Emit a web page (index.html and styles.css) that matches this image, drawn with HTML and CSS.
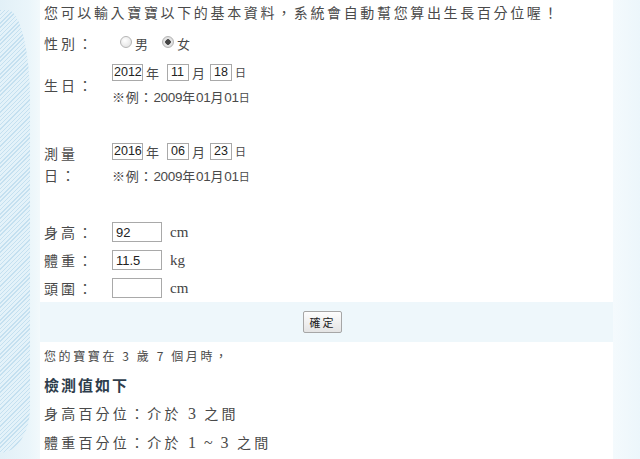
FILE: index.html
```html
<!DOCTYPE html>
<html>
<head>
<meta charset="utf-8">
<link rel="stylesheet" href="styles.css">
</head>
<body>
<div class="page">
  <div class="deco-left"><div class="stripes"></div></div>
  <div class="main">
    <div class="panel panel-form">
      <p class="intro">您可以輸入寶寶以下的基本資料，系統會自動幫您算出生長百分位喔！</p>
      <div class="row row-gender">
        <div class="label">性別：</div>
        <div class="field">
          <span class="radio"></span><span class="opt">男</span>
          <span class="radio checked"></span><span class="opt">女</span>
        </div>
      </div>
      <div class="row row-birth">
        <div class="label">生日：</div>
        <div class="field">
          <div class="date">
            <input class="num year" value="2012"><span class="u">年</span>
            <input class="num md" value="11"><span class="u">月</span>
            <input class="num md" value="18"><span class="u sm">日</span>
          </div>
          <div class="example">※例：<span class="d">2009</span>年<span class="d">01</span>月<span class="d">01</span><span class="sm">日</span></div>
        </div>
      </div>
      <div class="row row-measure">
        <div class="label">測量日：</div>
        <div class="field">
          <div class="date">
            <input class="num year" value="2016"><span class="u">年</span>
            <input class="num md" value="06"><span class="u">月</span>
            <input class="num md" value="23"><span class="u sm">日</span>
          </div>
          <div class="example">※例：<span class="d">2009</span>年<span class="d">01</span>月<span class="d">01</span><span class="sm">日</span></div>
        </div>
      </div>
      <div class="row row-metric first">
        <div class="label">身高：</div>
        <div class="field"><input class="num big" value="92"><span class="unit">cm</span></div>
      </div>
      <div class="row row-metric">
        <div class="label">體重：</div>
        <div class="field"><input class="num big" value="11.5"><span class="unit">kg</span></div>
      </div>
      <div class="row row-metric">
        <div class="label">頭圍：</div>
        <div class="field"><input class="num big" value=""><span class="unit">cm</span></div>
      </div>
    </div>
    <div class="band"><button class="btn">確定</button></div>
    <div class="panel panel-result">
      <p class="age">您的寶寶在 3 歲 7 個月時，</p>
      <p class="heading">檢測值如下</p>
      <p class="res">身高百分位：介於 <span class="n">3</span> 之間</p>
      <p class="res">體重百分位：介於 <span class="n">1 ~ 3</span> 之間</p>
    </div>
  </div>
  <div class="deco-right"></div>
</div>
</body>
</html>
```

FILE: styles.css
```css
html, body {
  margin: 0;
  padding: 0;
}
body {
  background: #eef7fb;
  font-family: "Noto Sans CJK TC", "Noto Sans", sans-serif;
  color: #4a4a4a;
}
.page {
  display: flex;
  width: 640px;
  height: 459px;
  overflow: hidden;
}
.deco-left {
  width: 40px;
  flex: none;
  background: linear-gradient(to right, #e2f0f7, #eaf5fa 70%, #f2f9fc);
  display: flex;
}
.stripes {
  width: 30px;
  margin: 10px 0 6px 0;
  border-radius: 0 30px 40px 0 / 0 120px 60px 0;
  background: repeating-linear-gradient(135deg, #c4e0f0 0 1px, #e4f2f9 1px 3px);
}
.main {
  width: 573px;
  flex: none;
  display: flex;
  flex-direction: column;
}
.deco-right {
  flex: 1;
  background: linear-gradient(to right, #f4fafd, #ecf6fb);
}
.panel {
  background: #ffffff;
  box-sizing: border-box;
}
.panel-form {
  height: 302px;
  padding: 4px 0 0 4px;
  overflow: hidden;
}
.intro {
  margin: 0;
  font-size: 14px;
  line-height: 17px;
  letter-spacing: 2.65px;
  white-space: nowrap;
}
.row {
  display: flex;
  align-items: center;
}
.label {
  width: 60px;
  margin-right: 8px;
  font-size: 14px;
  line-height: 22px;
  letter-spacing: 3px;
}
.field {
  display: flex;
  flex-direction: column;
}
.row-gender {
  margin-top: 11px;
  height: 22px;
}
.row-gender .field {
  flex-direction: row;
  align-items: center;
  padding-left: 8px;
}
.radio {
  width: 10px;
  height: 10px;
  border-radius: 50%;
  border: 1px solid #b5b5b5;
  background: radial-gradient(circle at 40% 35%, #ffffff, #dcdcdc);
  position: relative;
  top: -1px;
}
.radio.checked {
  background: radial-gradient(circle, #444 0 2.5px, #e8e8e8 3px, #cfcfcf);
  margin-left: 14px;
}
.opt {
  font-size: 13px;
  margin-left: 3px;
}
.row-birth {
  margin-top: 7px;
}
.row-measure {
  margin-top: 32px;
}
.date {
  display: flex;
  align-items: center;
  height: 22px;
}
.num {
  box-sizing: border-box;
  height: 17px;
  border: 1px solid #a9a9a9;
  padding: 0 0 0 1px;
  margin: 0;
  font-family: "Liberation Sans", Arial, sans-serif;
  font-size: 12.5px;
  color: #222;
  background: #fff;
  outline: none;
}
.year {
  width: 31px;
}
.md {
  width: 22px;
  margin-left: 8px;
  padding-left: 3px;
}
.date .md + .u + .md {
  margin-left: 5px;
}
.u {
  font-size: 13px;
  margin-left: 3px;
  width: 13px;
}
.sm {
  font-size: 11px;
}
.example {
  margin-top: 3px;
  height: 22px;
  line-height: 22px;
  font-size: 13px;
  letter-spacing: 0.8px;
  white-space: nowrap;
}
.example .d {
  font-family: "Liberation Sans", Arial, sans-serif;
  font-size: 13.5px;
  letter-spacing: -0.3px;
}
.row-metric {
  height: 28px;
}
.row-metric.first {
  margin-top: 31px;
}
.big {
  width: 50px;
  height: 20px;
  padding-left: 3px;
  font-size: 13px;
}
.row-metric .field {
  flex-direction: row;
  align-items: center;
}
.unit {
  margin-left: 8px;
  font-family: "Liberation Serif", serif;
  font-size: 15px;
  color: #444;
}
.band {
  height: 40px;
  box-sizing: border-box;
  padding: 9px 8px 0 0;
  display: flex;
  justify-content: center;
  align-items: flex-start;
}
.btn {
  width: 39px;
  height: 22px;
  padding: 0;
  border: 1px solid #a6a6a6;
  border-radius: 2px;
  background: linear-gradient(#fdfdfd, #e4e4e4);
  font-family: "Noto Sans CJK TC", sans-serif;
  font-size: 11px;
  letter-spacing: 2px;
  color: #222;
}
.panel-result {
  flex: 1;
  padding: 5px 0 0 4px;
}
.panel-result p {
  margin: 0;
  white-space: nowrap;
}
.age {
  font-size: 12px;
  line-height: 18px;
  letter-spacing: 2.6px;
}
.heading {
  margin-top: 6px !important;
  font-size: 15px;
  line-height: 28px;
  font-weight: bold;
  letter-spacing: 2px;
  color: #2e3d4c;
}
.res {
  font-size: 14px;
  line-height: 28px;
  letter-spacing: 3.2px;
}
.res .n {
  font-family: "Liberation Serif", serif;
  font-size: 16px;
  letter-spacing: 2px;
}
```
